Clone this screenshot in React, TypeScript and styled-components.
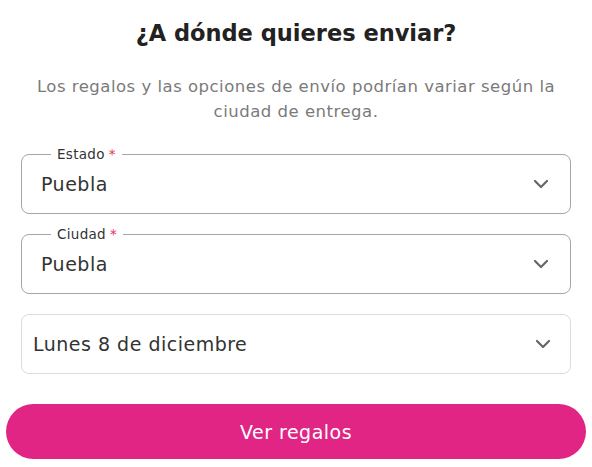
import React from "react";
import styled, { createGlobalStyle } from "styled-components";

const Global = createGlobalStyle`
  * { box-sizing: border-box; }
  body {
    margin: 0;
    background: #ffffff;
    font-family: "DejaVu Sans", "Open Sans", sans-serif;
  }
`;

const Page = styled.div`
  width: 592px;
  padding: 18px 6px 0;
  display: flex;
  flex-direction: column;
  align-items: stretch;
`;

const Title = styled.h1`
  margin: 0;
  text-align: center;
  font-size: 22.5px;
  line-height: 30px;
  font-weight: 700;
  color: #222222;
`;

const Intro = styled.p`
  margin: 26px 20px 0;
  text-align: center;
  font-size: 16.5px;
  line-height: 25px;
  letter-spacing: 0.5px;
  color: #7a7a7a;
`;

const Fields = styled.div`
  margin: 30px 15px 0;
  display: flex;
  flex-direction: column;
  gap: 20px;
`;

const Box = styled.div<{ $light?: boolean }>`
  position: relative;
  height: 60px;
  border: 1px solid ${(p) => (p.$light ? "#dcdcdc" : "#a6a6a6")};
  border-radius: 8px;
  display: flex;
  align-items: center;
  cursor: pointer;
`;

const Label = styled.span`
  position: absolute;
  top: -9px;
  left: 29px;
  padding: 0 6px;
  background: #ffffff;
  font-size: 13.5px;
  line-height: 16px;
  letter-spacing: 0.3px;
  color: #333333;
`;

const Required = styled.span`
  color: #e8345a;
  margin-left: 4px;
`;

const Value = styled.span<{ $inset: number }>`
  flex: 1;
  padding-left: ${(p) => p.$inset}px;
  font-size: 19px;
  letter-spacing: 0.5px;
  color: #333333;
`;

const Chevron = styled.svg<{ $right: number }>`
  width: 16px;
  height: 10px;
  margin-right: ${(p) => p.$right}px;
  flex: none;
`;

const Button = styled.button`
  margin-top: 30px;
  height: 55px;
  border: none;
  border-radius: 28px;
  background: #e02585;
  color: #ffffff;
  font-family: inherit;
  font-size: 19px;
  letter-spacing: 0.5px;
  cursor: pointer;
`;

function Arrow({ right }: { right: number }) {
  return (
    <Chevron $right={right} viewBox="0 0 16 10">
      <path d="M2 2 L8 8 L14 2" fill="none" stroke="#666" strokeWidth="2.2" strokeLinecap="round" strokeLinejoin="round" />
    </Chevron>
  );
}

function Select({ label, value }: { label?: string; value: string }) {
  if (!label) {
    return (
      <Box $light>
        <Value $inset={11}>{value}</Value>
        <Arrow right={19} />
      </Box>
    );
  }
  return (
    <Box>
      <Label>
        {label}
        <Required>*</Required>
      </Label>
      <Value $inset={19}>{value}</Value>
      <Arrow right={21} />
    </Box>
  );
}

export default function App() {
  return (
    <Page>
      <Global />
      <Title>¿A dónde quieres enviar?</Title>
      <Intro>
        Los regalos y las opciones de envío podrían variar según la ciudad de entrega.
      </Intro>
      <Fields>
        <Select label="Estado" value="Puebla" />
        <Select label="Ciudad" value="Puebla" />
        <Select value="Lunes 8 de diciembre" />
      </Fields>
      <Button>Ver regalos</Button>
    </Page>
  );
}
